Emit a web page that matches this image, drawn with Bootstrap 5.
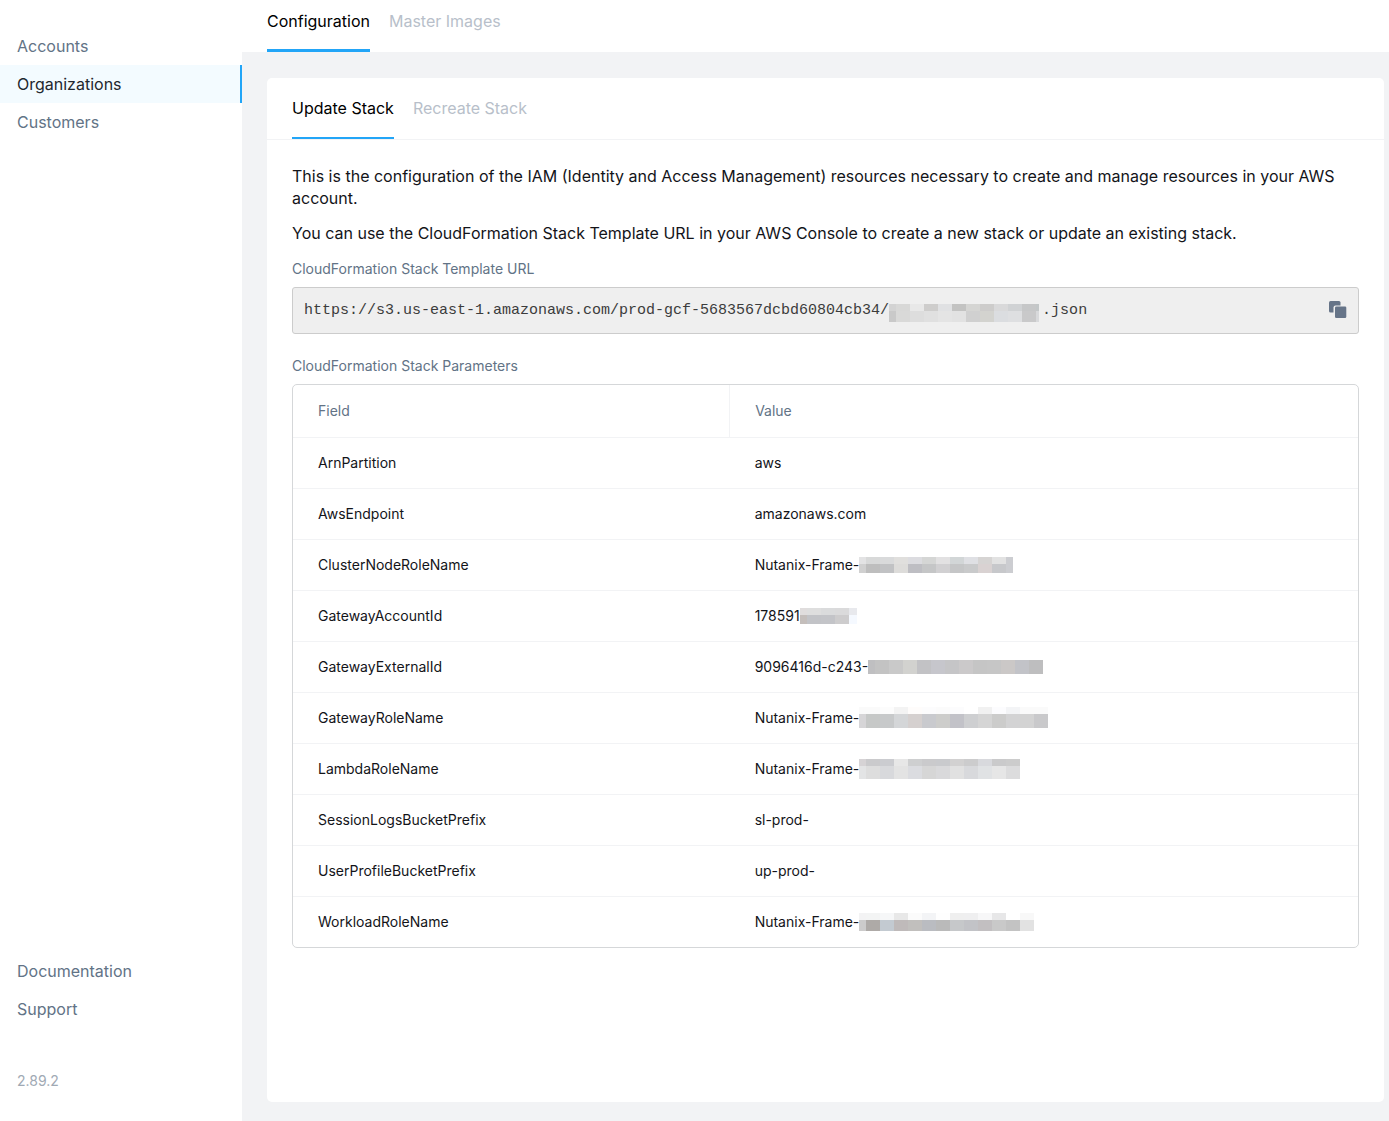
<!DOCTYPE html>
<html lang="en">
<head>
<meta charset="utf-8">
<meta name="viewport" content="width=device-width, initial-scale=1">
<title>Organizations - Configuration</title>
<link href="https://cdn.jsdelivr.net/npm/bootstrap@5.3.0/dist/css/bootstrap.min.css" rel="stylesheet">
<style>
  body { font-family: Inter, sans-serif; font-size: 16px; line-height: 22px; color: #131419; background: #f2f3f5; }
  .side-panel { width: 242px; padding: 27px 0 30px; }
  .side-panel .nav-link { height: 38px; padding: 8px 17px; color: #627386; }
  .side-panel .nav-link.active { color: #22272e; background: #f3fbff; border-right: 2px solid #22a5f7; }
  .app-version { font-size: 14px; line-height: 20px; padding: 0 17px; margin-top: 43px; color: #a0a9b4; }
  .tab-strip { gap: 19px; }
  .tab-strip .nav-link { padding: 0; color: #b8bfca; border-bottom: 0 solid transparent; }
  .tab-strip .nav-link.active { color: #000; border-color: #22a5f7; }
  .top-tabs { padding: 0 25px; }
  .top-tabs .nav-link { height: 52px; padding-top: 10px; border-bottom-width: 3px; }
  .content-area { padding: 26px 5px 19px 25px; }
  .stack-panel { border-radius: 5px; }
  .stack-tabs { padding: 0 25px; border-bottom: 1px solid #f2f3f5; }
  .stack-tabs .nav-link { height: 61px; padding-top: 19px; border-bottom-width: 2px; }
  .stack-body { padding: 25px; }
  .stack-body p { margin-bottom: 13px; }
  .field-label { font-size: 14px; line-height: 20px; padding-top: 2px; color: #627386; }
  .url-group { margin-bottom: 20px; }
  .url-input.form-control { height: 47px; padding: 0 48px 0 11px; font: 15px "Liberation Mono", monospace; color: #3c3c3c; background: #efefef; border: 1px solid #ccc; border-radius: 3px; }
  .url-mask { left: 12px; top: 17px; padding-left: 65ch; font: 15px "Liberation Mono", monospace; line-height: 0; pointer-events: none; }
  .copy-btn { right: 12px; top: 14px; line-height: 0; }
  .param-frame { border: 1px solid #d5d7d9; border-radius: 5px; }
  .param-grid { font-size: 14px; line-height: 20px; color: #131419; --bs-table-bg: transparent; }
  .param-grid th, .param-grid td { height: 51px; padding: 0 25px; border-bottom: 1px solid #f2f3f5; color: inherit; font-weight: 400; vertical-align: middle; }
  .param-grid thead th { height: 52px; color: #627386; }
  .param-grid thead th:first-child { width: 41%; border-right: 1px solid #f2f3f5; }
  .param-grid tbody tr:last-child > * { border-bottom: 0; }
  .cell-value { height: 20px; }
  svg { display: block; flex: none; }
</style>
<script src="https://cdn.jsdelivr.net/npm/bootstrap@5.3.0/dist/js/bootstrap.bundle.min.js"></script>
</head>
<body>
<div class="d-flex min-vh-100">
  <nav class="side-panel bg-white d-flex flex-column flex-shrink-0" aria-label="Main">
    <div class="nav flex-column">
      <a class="nav-link" href="#">Accounts</a>
      <a class="nav-link active" href="#" aria-current="page">Organizations</a>
      <a class="nav-link" href="#">Customers</a>
    </div>
    <div class="nav flex-column mt-auto">
      <a class="nav-link" href="#">Documentation</a>
      <a class="nav-link" href="#">Support</a>
    </div>
    <div class="app-version">2.89.2</div>
  </nav>
  <div class="d-flex flex-column flex-grow-1">
    <nav class="nav tab-strip top-tabs bg-white" aria-label="Organization">
      <a class="nav-link active" href="#">Configuration</a>
      <a class="nav-link" href="#">Master Images</a>
    </nav>
    <main class="content-area d-flex flex-column flex-grow-1">
      <section class="stack-panel bg-white flex-grow-1">
        <nav class="nav tab-strip stack-tabs" aria-label="Stack">
          <a class="nav-link active" href="#">Update Stack</a>
          <a class="nav-link" href="#">Recreate Stack</a>
        </nav>
        <div class="stack-body">
          <p>This is the configuration of the IAM (Identity and Access Management) resources necessary to create and manage resources in your AWS account.</p>
          <p>You can use the CloudFormation Stack Template URL in your AWS Console to create a new stack or update an existing stack.</p>
          <label class="field-label d-block mb-2" for="templateUrl">CloudFormation Stack Template URL</label>
          <div class="url-group position-relative">
            <input class="form-control url-input" id="templateUrl" type="text" readonly value="https://s3.us-east-1.amazonaws.com/prod-gcf-5683567dcbd60804cb34/                 .json">
            <div class="url-mask position-absolute" data-mosaic="7:d3d3d3,c9c9c9;14:d8d8d7,d9d9d8;14:e8e8e8,dddddd;14:cecdcc,e0e0e0;14:e0e1e3,e4e4e4;14:c3c3c2,e2e2e2;14:d5d5d3,d0d0d0;14:cdcccb,d3d3cf;14:d9d9da,dbdde0;14:d0d2d4,dedfe1;14:c6c7c8,c9c9ca;3:c3c7c8,d8d9db" data-split="7,11"></div>
            <button class="copy-btn btn p-0 border-0 position-absolute" type="button" aria-label="Copy URL">
              <svg width="18" height="18" viewBox="0 0 18 18"><rect width="11.500" height="11.500" rx="1.500" fill="#667488"/><path d="M4.500 18V6.500Q4.500 4.500 6.500 4.500H18V18Z" fill="#efefef"/><rect x="6" y="5.500" width="11.300" height="11.500" rx="1.300" fill="#667488"/></svg>
            </button>
          </div>
          <div class="field-label mb-2" id="paramsLabel">CloudFormation Stack Parameters</div>
          <div class="param-frame">
            <table class="table param-grid mb-0" aria-labelledby="paramsLabel">
              <thead><tr><th scope="col">Field</th><th scope="col">Value</th></tr></thead>
              <tbody>
                <tr><td>ArnPartition</td><td>aws</td></tr>
                <tr><td>AwsEndpoint</td><td>amazonaws.com</td></tr>
                <tr><td>ClusterNodeRoleName</td><td><div class="cell-value d-flex align-items-center">Nutanix-Frame-<span data-mosaic="7:e3e3e4,d0d0d0;14:d8d9d9,bebebe;14:d9dadb,c1c2c4;14:e0dfdd,dddcda;14:dcdce0,bebec3;14:d5d6d5,c5c6c7;14:e2e1e2,d1d0d2;14:d2d6d7,c5c6c7;14:dfe0e4,c9cacb;14:d6d4d3,d9d2d2;14:e2e2e2,c7c8cb;7:cccdd1,cccdd1" data-split="7,9"></span></div></td></tr>
                <tr><td>GatewayAccountId</td><td><div class="cell-value d-flex align-items-center">178591<span data-mosaic="7:e0dddd,c4bebb;14:dedede,c2c3c7;14:dadbdc,c3c4c8;14:dadadb,cdcccd;8:e8e9ed,f5f9ff" data-split="7,9"></span></div></td></tr>
                <tr><td>GatewayExternalId</td><td><div class="cell-value d-flex align-items-center">9096416d-c243-<span data-mosaic="7:bfbfc1;14:c3c3c3;14:c9c9c9;14:d2d2cf;14:c2c2c5;14:c6c6cc;14:c5c5c7;14:cbc9ca;14:c5c5c5;14:c6c6c6;14:cbc8c7;14:c2c3c8;14:bebebf" data-split="14"></span></div></td></tr>
                <tr><td>GatewayRoleName</td><td><div class="cell-value d-flex align-items-center">Nutanix-Frame-<span data-mosaic="7:fafafa,d6d5d7;14:fafafa,c6c8c7;14:fcfcfc,c7c9ca;14:f3f3f3,d4d6d8;14:fefcfb,d5d0cf;14:fcfcfd,c9cace;14:fbfbfb,cdcdcb;14:fcfcfd,c2c2c8;14:ffffff,cecfd1;14:f1f1f1,d5d5d5;14:fcfcfe,cccccb;14:f3f4f6,d3d3d4;14:fafafa,d3d3d3;14:fafafa,c9c9cb" data-split="7,14"></span></div></td></tr>
                <tr><td>LambdaRoleName</td><td><div class="cell-value d-flex align-items-center">Nutanix-Frame-<span data-mosaic="7:d6d3d5,e3e4e5;14:cacacc,dddddd;14:cbccd0,d8d9dc;14:e7e7e7,e3e3e3;14:cecfd0,dbdce0;14:cacacc,d6d6d6;14:c9cacd,d9d9db;14:d2d1d1,e1e1e1;14:cccccd,d8d9dc;14:d8d9dd,e0e2e4;14:cacacb,e6e6e6;14:cccccc,dcdcdd" data-split="7,13"></span></div></td></tr>
                <tr><td>SessionLogsBucketPrefix</td><td>sl-prod-</td></tr>
                <tr><td>UserProfileBucketPrefix</td><td>up-prod-</td></tr>
                <tr><td>WorkloadRoleName</td><td><div class="cell-value d-flex align-items-center">Nutanix-Frame-<span data-mosaic="7:f3f3f4,cccbcb;14:f3f4f4,aeaaa7;14:f6f7f8,c3cad1;14:e8e8e8,bfbaba;14:fbfbfb,c1bfbd;14:f3f4f6,babcc1;14:fefefe,bababa;14:efefef,c6c8ca;14:efeff0,c2c3c7;14:f7f7f8,c2bfc1;14:e7e7e8,c9c9c9;14:ffffff,c3c3c3;14:f8f8f8,e2e2e2" data-split="7,11"></span></div></td></tr>
              </tbody>
            </table>
          </div>
        </div>
      </section>
    </main>
  </div>
</div>
<script>
  // Draws each pixelated mask: "width:top,bottom" columns, row heights in data-split
  document.querySelectorAll('[data-mosaic]').forEach(function (el) {
    var split = el.dataset.split.split(',').map(Number), x = 0, rects = '';
    el.dataset.mosaic.split(';').forEach(function (col) {
      var part = col.split(':'), w = +part[0], y = 0;
      part[1].split(',').forEach(function (c, i) {
        rects += '<rect x="' + x + '" y="' + y + '" width="' + w + '" height="' + split[i] + '" fill="#' + c + '"/>';
        y += split[i];
      });
      x += w;
    });
    var h = split.reduce(function (a, b) { return a + b; });
    el.innerHTML = '<svg width="' + x + '" height="' + h + '" shape-rendering="crispEdges" aria-hidden="true">' + rects + '</svg>';
  });
</script>
</body>
</html>
